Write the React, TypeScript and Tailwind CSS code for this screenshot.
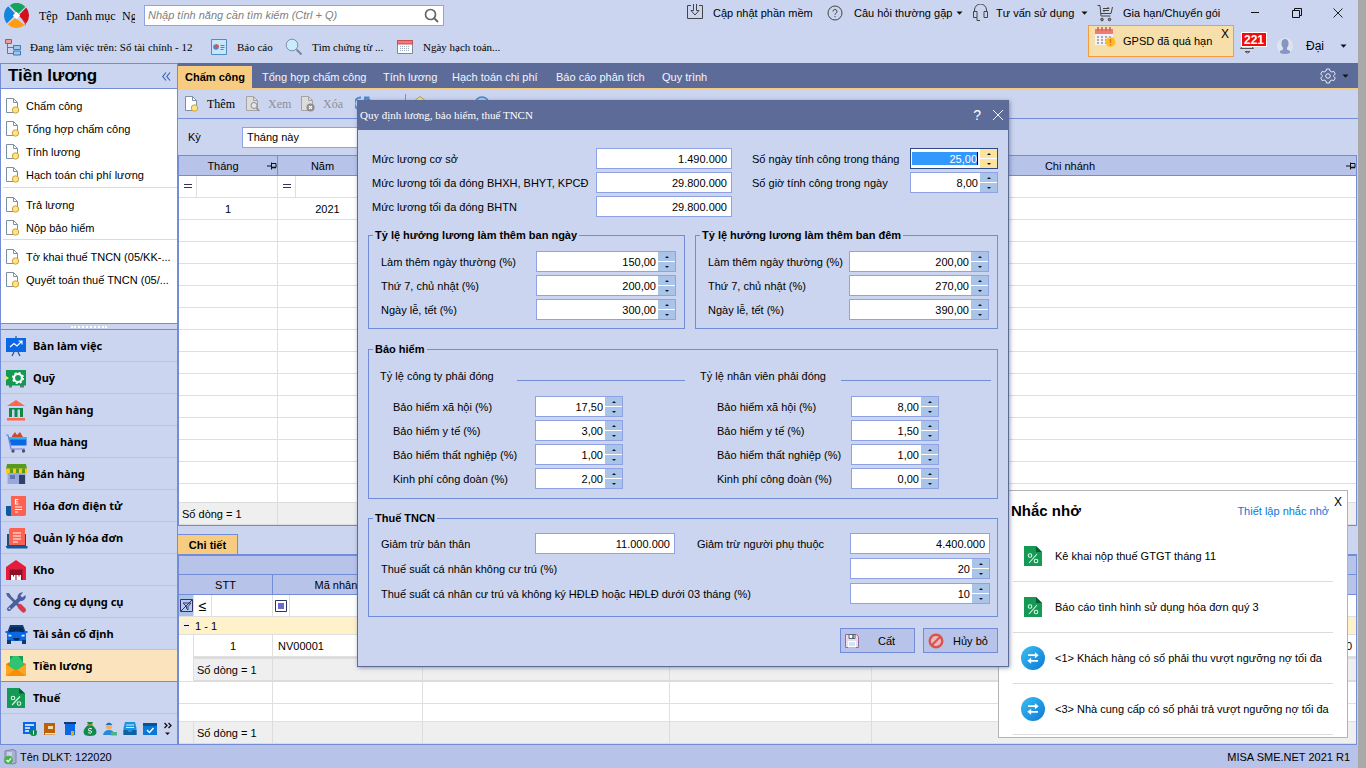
import React, { useId } from "react";

/* ---------- small shared drawings ---------- */

const Caret = ({ className = "" }: { className?: string }) => (
  <svg className={`shrink-0 ${className}`} width="7" height="4" viewBox="0 0 7 4" aria-hidden="true">
    <path d="M0.500 0.500h6L3.500 3.800z" fill="#111" />
  </svg>
);

const DocIcon = ({ kind = "new" }: { kind?: "new" | "view" | "delete" }) => {
  const off = kind !== "new";
  return (
    <svg width="16" height="16" viewBox="0 0 16 16" className="shrink-0" aria-hidden="true">
      <path d="M1.500 0.500h7l4 4v10h-11z" fill={off ? "#dcdcdc" : "#fff"} stroke={off ? "#a3a3a3" : "#7d8fa3"} />
      <path d="M8.500 0.500v4h4" fill="none" stroke={off ? "#a3a3a3" : "#7d8fa3"} />
      {kind === "new" && <circle cx="10.500" cy="12" r="3.200" fill="#ffe38a" stroke="#c9a23a" />}
      {kind === "view" && (
        <g fill="#e5e5e5" stroke="#8f8f8f">
          <circle cx="9" cy="9.500" r="3" />
          <path d="M11.300 12l3 3" strokeWidth="1.600" />
        </g>
      )}
      {kind === "delete" && (
        <g>
          <circle cx="10.500" cy="11.500" r="4" fill="#8d8d8d" />
          <path d="M9 10l3 3m0-3l-3 3" stroke="#fff" strokeWidth="1.100" />
        </g>
      )}
    </svg>
  );
};

const TaxIcon = () => (
  <svg width="20" height="22" viewBox="0 0 20 22" aria-hidden="true">
    <path d="M1 1h12l6 6v14H1z" fill="#149a55" />
    <path d="M13 1l6 6h-6z" fill="#075c30" />
    <g fill="none" stroke="#dff5e8" strokeWidth="1.100">
      <circle cx="7" cy="10.500" r="1.800" />
      <circle cx="13" cy="16" r="1.800" />
      <path d="M14 9L6 18" />
    </g>
  </svg>
);

const SwapIcon = () => (
  <svg width="24" height="24" viewBox="0 0 24 24" aria-hidden="true">
    <defs>
      <linearGradient id="swap-fill" x1="0" y1="0" x2="1" y2="1">
        <stop offset="0" stopColor="#3bc0f0" />
        <stop offset="1" stopColor="#0b78d6" />
      </linearGradient>
    </defs>
    <circle cx="12" cy="12" r="12" fill="url(#swap-fill)" />
    <g stroke="#fff" strokeWidth="1.700" fill="#fff">
      <path d="M7 9.200h8M9 14.800h8" />
      <path d="M14 6.500l3.500 2.700-3.500 2.700zM10 12.100l-3.500 2.700 3.500 2.700z" strokeWidth="0.300" />
    </g>
  </svg>
);

const PinIcon = () => (
  <svg width="10" height="8" viewBox="0 0 10 8" aria-hidden="true">
    <path d="M0 4h4M4.500 0.500v7M4.500 1.500h4.500v4h-4.500" fill="none" stroke="#111" />
    <path d="M4.500 5.500h4.500" stroke="#111" strokeWidth="1.600" />
  </svg>
);

/* ---------- header ---------- */

const Logo = () => (
  <svg width="25" height="25" viewBox="-12 -12 24 24" aria-hidden="true">
    <path d="M-4 -11.300A12 12 0 0 1 8.500 -8.500L1.500 -1.500L-6.500 -9.500z" fill="#16a35c" />
    <path d="M9.300 -7.600A12 12 0 0 1 9.500 7.300L2 0z" fill="#d3101b" />
    <path d="M9.500 7.300L4.500 2.500L9 9A12 12 0 0 1 7.500 9.400z" fill="#d3101b" />
    <path d="M7.800 9.200A12 12 0 0 1 -8.500 8.500L-1 2.500z" fill="#ff9c10" />
    <path d="M-9.300 7.600A12 12 0 0 1 -8 -9L-1.500 -2L-3 1.500z" fill="#1285dc" />
    <path d="M0 -3.500L3.500 0L0 3.500L-3.500 0z" fill="#fff" />
  </svg>
);

const Header = () => (
  <header className="flex h-[63px] shrink-0 justify-between">
    <div className="flex flex-col font-['Liberation_Serif',serif]">
      <div className="flex h-[31px] items-center pl-1 text-xs">
        <Logo />
        <nav className="flex items-center overflow-hidden">
          <a href="#tep" className="ml-[10px] w-[27px]">Tệp</a>
          <a href="#danhmuc" className="w-14 whitespace-nowrap">Danh mục</a>
          <a href="#nghiepvu" className="w-[13px] overflow-hidden whitespace-nowrap">Ng</a>
        </nav>
        <div className="ml-[9px] flex h-[21px] w-[300px] items-center border border-[#8fa3e4] bg-white pr-1">
          <input
            aria-label="Tìm kiếm"
            placeholder="Nhập tính năng cần tìm kiếm (Ctrl + Q)"
            className="min-w-0 flex-1 pl-[3px] font-['Liberation_Sans',sans-serif] text-[11px] italic outline-none placeholder:text-[#808080]"
          />
          <svg width="15" height="15" viewBox="0 0 15 15" aria-hidden="true">
            <circle cx="6.500" cy="6.500" r="5" fill="none" stroke="#666" strokeWidth="1.700" />
            <path d="M10 10l4 4" stroke="#666" strokeWidth="1.800" />
          </svg>
        </div>
      </div>
      <div className="flex h-8 items-center pl-1">
        <svg width="18" height="18" viewBox="0 0 18 18" aria-hidden="true">
          <path d="M3.500 6v9.500H9M3.500 9.500H9" fill="none" stroke="#5f7896" />
          <path d="M1.500 1.500h6v4h-6z" fill="#f59a9a" stroke="#cc4848" />
          <path d="M9.500 7.500h7v4h-7zM9.500 13h7v4h-7z" fill="#9cc7ee" stroke="#3e79b8" />
        </svg>
        <a href="#dulieu" className="ml-2 w-[181px] whitespace-nowrap">Đang làm việc trên: Sổ tài chính - 12</a>
        <svg width="16" height="16" viewBox="0 0 16 16" aria-hidden="true">
          <path d="M0.500 0.500h15v15h-15z" fill="#c8e6fa" stroke="#4d8fc4" />
          <circle cx="5" cy="8" r="2.800" fill="#5f7fc0" />
          <path d="M5 8V5.200A2.800 2.800 0 0 1 7.800 8z" fill="#d9534f" />
          <path d="M9.500 6.500h4M9.500 8.500h4M9.500 10.500h3" stroke="#4d7fb8" />
        </svg>
        <a href="#baocao" className="ml-[10px] w-12 whitespace-nowrap">Báo cáo</a>
        <svg width="18" height="18" viewBox="0 0 18 18" aria-hidden="true">
          <circle cx="7" cy="7" r="5.800" fill="#c9edfb" stroke="#7d93a8" />
          <path d="M11.500 11.500l5 5" stroke="#76869b" strokeWidth="2" />
        </svg>
        <a href="#timct" className="ml-[9px] w-[85px] whitespace-nowrap">Tìm chứng từ ...</a>
        <svg width="16" height="16" viewBox="0 0 16 16" aria-hidden="true">
          <path d="M0.500 1.500h15v13h-15z" fill="#fff" stroke="#7e8a9c" />
          <path d="M0.500 1.500h15v3.500h-15z" fill="#f07a7a" stroke="#c94b4b" />
          <path d="M3 7.500h10M3 9.500h10M3 11.500h10" stroke="#9cabc0" strokeDasharray="1 1" />
        </svg>
        <a href="#ngayht" className="ml-[10px] whitespace-nowrap">Ngày hạch toán...</a>
      </div>
    </div>

    <div className="flex flex-col">
      <div className="flex h-[25px] items-center">
        <svg width="18" height="18" viewBox="0 0 18 18" fill="none" stroke="#444" aria-hidden="true">
          <path d="M5 1.500H1.500v13h15v-13H13" />
          <path d="M7.500 0v6.500H5l4 4.500 4-4.500h-2.500V0" />
        </svg>
        <button className="ml-[9px] w-[114px] text-left whitespace-nowrap">Cập nhật phần mềm</button>
        <svg width="16" height="16" viewBox="0 0 16 16" fill="none" stroke="#444" aria-hidden="true">
          <circle cx="8" cy="8" r="7" />
          <path d="M6 6.500a2 2 0 1 1 2.800 1.800c-.6.3-.8.700-.8 1.400M8 11v1.200" />
        </svg>
        <button className="ml-[11px] w-[102px] text-left whitespace-nowrap">Câu hỏi thường gặp</button>
        <Caret />
        <svg className="ml-[9px]" width="17" height="18" viewBox="0 0 17 18" fill="none" stroke="#444" aria-hidden="true">
          <path d="M2.500 7.500V6a6 6 0 0 1 12 0v1.500" />
          <path d="M1.500 7.500h3.500v6H1.500zM12 7.500h3.500v6H12zM5 13.500v3h3" />
        </svg>
        <button className="ml-[7px] w-[85px] text-left whitespace-nowrap">Tư vấn sử dụng</button>
        <Caret />
        <svg className="ml-[9px]" width="17" height="18" viewBox="0 0 17 18" fill="none" stroke="#444" aria-hidden="true">
          <path d="M0.500 1.500h2.500l1 10.500h9.500M3.500 9.500h10.500l1.500-6.500" />
          <path d="M6 4.500h6l-1.500-1.500M12 6.500H6l1.500 1.500" />
          <circle cx="5" cy="15.500" r="1.300" fill="#888" />
          <circle cx="12.500" cy="15.500" r="1.300" fill="#888" />
        </svg>
        <button className="ml-[9px] w-[111px] text-left whitespace-nowrap">Gia hạn/Chuyển gói</button>
        <button aria-label="Thu nhỏ" className="flex w-[42px] justify-center">
          <svg width="12" height="12" viewBox="0 0 12 12"><path d="M2 5.500h8" stroke="#111" /></svg>
        </button>
        <button aria-label="Khôi phục" className="flex w-[42px] justify-center">
          <svg width="12" height="12" viewBox="0 0 12 12" fill="none" stroke="#111">
            <path d="M1.500 3.500h7v7h-7zM3.500 3.500v-2h7v7h-2" />
          </svg>
        </button>
        <button aria-label="Đóng" className="flex w-10 justify-center">
          <svg width="12" height="12" viewBox="0 0 12 12"><path d="M1.500 1.500l9 9M10.500 1.500l-9 9" stroke="#222" /></svg>
        </button>
      </div>
      <div className="flex h-[38px] items-start justify-end">
        <div className="relative flex h-8 w-[146px] items-center border border-[#f59b3a] bg-[#f6dfaa] pl-1">
          <svg className="-mt-2" width="24" height="24" viewBox="0 0 24 24" aria-hidden="true">
            <path d="M2 4h18v16H2z" fill="#f7f1f2" />
            <path d="M2 4h18v5H2z" fill="#ef7b78" />
            <path d="M5 2v4M9 2v4M13 2v4M17 2v4" stroke="#c9605f" strokeWidth="1.500" />
            <path d="M4 12h14M4 15h14M4 18h10" stroke="#8b93a8" strokeWidth="1.500" strokeDasharray="2 2" />
            <circle cx="17.500" cy="17" r="5" fill="#fbbf2d" />
            <path d="M17.500 14v4M17.500 19v1.200" stroke="#e86f1c" strokeWidth="1.500" />
          </svg>
          <span className="ml-[6px] whitespace-nowrap">GPSD đã quá hạn</span>
          <button aria-label="Đóng thông báo" className="absolute top-px right-1 text-xs leading-[14px]">X</button>
        </div>
        <div className="relative ml-[6px] h-8 w-9">
          <svg className="absolute top-[14px] left-0" width="16" height="16" viewBox="0 0 16 16" fill="none" stroke="#555" aria-hidden="true">
            <path d="M2 7.500L0.500 9.500h13L12 7.500M5 12.500l2.500 1.500 2.500-1.500z" />
          </svg>
          <span className="absolute top-[7px] left-px h-[15px] border border-white bg-[#f40b0b] px-[2px] text-xs leading-[14px] font-bold text-white">221</span>
        </div>
        <svg className="mt-3 mr-3" width="18" height="18" viewBox="0 0 18 18" aria-hidden="true">
          <circle cx="9" cy="9" r="8" fill="#dfe3ee" />
          <ellipse cx="9" cy="6.500" rx="3.500" ry="4.500" fill="#8595c4" />
          <path d="M7 9h4v3.500l3 1.500v2q-5 2-10 0v-2l3-1.500z" fill="#8595c4" />
        </svg>
        <button className="mt-3 flex h-[18px] w-[52px] items-center text-xs">
          <span className="w-[34px] text-left">Đại</span>
          <Caret />
        </button>
      </div>
    </div>
  </header>
);

/* ---------- sidebar ---------- */

const navIcons: Record<string, React.ReactNode> = {
  desk: (
    <g>
      <path d="M10 0v3" stroke="#17345f" />
      <path d="M0 2h20v14H0z" fill="#0a67e6" />
      <path d="M4 11l4-3.500 3 2.500 5-5M12.500 5H16v3.500" fill="none" stroke="#fff" strokeWidth="1.100" />
      <path d="M8 16l-2 4M12 16l2 4" stroke="#21518c" strokeWidth="1.200" />
    </g>
  ),
  safe: (
    <g>
      <path d="M3 17h3v2.500H3zM14 17h4v2.500h-4z" fill="#6b7280" />
      <path d="M0 2h20v15.500H0z" fill="#119a50" />
      <path d="M0 8l3 2-3 2z" fill="#ffe94a" />
      <circle cx="12" cy="10" r="4" fill="none" stroke="#fff" strokeWidth="2.200" />
      <circle cx="12" cy="10" r="5.300" fill="none" stroke="#fff" strokeWidth="1.500" strokeDasharray="2.100 2.060" />
    </g>
  ),
  bank: (
    <g>
      <path d="M10 0l9 6H1z" fill="#ff6650" />
      <path d="M3 8h14v1.500H3zM3 9h3v8H3zM8.500 9h3v8h-3zM14 9h3v8h-3z" fill="#0c8a48" />
      <path d="M1 18h18v2.500H1z" fill="#ff6650" />
    </g>
  ),
  cart: (
    <g>
      <path d="M6 4l3-4 2 3 3-3 3 5H6z" fill="#cf4a2c" />
      <path d="M3 5h17.500v8.500H5z" fill="#0a67e6" />
      <path d="M3 5h17.500v2.500H3.500z" fill="#33b2ee" />
      <path d="M0 3h2l3 14h14" fill="none" stroke="#6d7fe0" strokeWidth="1.200" />
      <circle cx="7" cy="19" r="1.700" fill="#4d5563" />
      <circle cx="17.500" cy="19" r="1.700" fill="#4d5563" />
    </g>
  ),
  shop: (
    <g>
      <path d="M1.500 9h18v11h-18z" fill="#98a8dc" />
      <path d="M13 11h6v9h-6z" fill="#33406e" />
      <path d="M4 11h5v4H4z" fill="#6176b8" />
      <path d="M1 0h19l1 5H0z" fill="#569a20" />
      <path d="M0 4.500h21V9H0z" fill="#ffc61a" />
      <path d="M4 4.500h3V9H4zM10 4.500h3V9h-3zM16 4.500h3V9h-3z" fill="#569a20" />
    </g>
  ),
  einvoice: (
    <g>
      <path d="M0 10h6v10H2q-2 0-2-2z" fill="#10599a" />
      <path d="M5 0h15v18q0 2-2 2H5z" fill="#ff6150" />
      <path d="M12.500 3.500H9.500v4.500h3M9.500 5.700h2.500M9 11h7M9 13.500h7M9 16h3" fill="none" stroke="#fff" strokeWidth="1.100" />
    </g>
  ),
  invoices: (
    <g>
      <path d="M1 6h19v12H1z" fill="#1b4e80" />
      <path d="M-0.500 18h22v2.500H1z" fill="#10599a" />
      <path d="M5 0h14v17H3V2q0-2 2-2z" fill="#ff6150" />
      <path d="M7 5h8M7 8h8M7 11h8M7 14h5" stroke="#fff" strokeWidth="1.100" />
    </g>
  ),
  store: (
    <g>
      <path d="M10 0l10 7v13H0V7z" fill="#e61c3c" />
      <path d="M3.500 9.500h13V20h-13z" fill="#8c1029" />
      <path d="M5 15h4.500v5H5zM10.500 15H15v5h-4.500z" fill="#fff" />
      <path d="M7 15h1v1.500H7zM12.500 15h1v1.500h-1z" fill="#8c1029" />
    </g>
  ),
  tools: (
    <g>
      <path d="M1.500 2.500l11 11" stroke="#4d64a0" strokeWidth="2.600" />
      <path d="M0 1l3 0 2 3-2 1-2-2z" fill="#4d64a0" />
      <path d="M3 17L14 6.500" stroke="#4a5fa0" strokeWidth="4" strokeLinecap="round" />
      <path d="M19.500 3l-3.300 2.500-1.800-1.800L17 .3A5 5 0 0 0 11.500 6q1.500 4 5 2.800A5 5 0 0 0 19.500 3z" fill="#4a5fa0" />
      <path d="M14 14.500l3.500 3.500" stroke="#d83a4c" strokeWidth="5" strokeLinecap="round" />
      <circle cx="3.500" cy="16.500" r="1" fill="#cbd5ef" />
    </g>
  ),
  car: (
    <g>
      <path d="M4 1h13l3 8H1z" fill="#0d3f7e" />
      <path d="M5 3h11l2 5H3z" fill="#082a57" />
      <path d="M-0.500 7h3v2h-3zM18.500 7h3v2h-3z" fill="#0a67e6" />
      <path d="M1 9q9.500-3 19 0v8H1z" fill="#0a67e6" />
      <path d="M1 16h4v4H1zM16 16h4v4h-4z" fill="#0b3a77" />
      <path d="M7 14h7l-1.500 2.500h-4z" fill="#082a57" />
      <path d="M2.500 10.500l3 .5v1.500h-3zM18.500 10.500l-3 .5v1.500h3z" fill="#d7ecff" />
    </g>
  ),
  salary: (
    <g>
      <path d="M0 8l10-5 10 5v12H0z" fill="#e07b0a" />
      <path d="M4 0h13v14H4z" fill="#2fc46f" />
      <path d="M4 0h3l-3 4zM17 0v6l-5-6z" fill="#1a9c55" />
      <path d="M0 8l10 7 10-7v12H0z" fill="#ffa51f" />
      <path d="M0 20l9-6.500h2L20 20z" fill="#f79009" />
    </g>
  ),
  tax: (
    <g>
      <path d="M1 0h12l6 5.500V20H1z" fill="#149a55" />
      <path d="M13 0l6 5.500h-6z" fill="#075c30" />
      <g fill="none" stroke="#dff5e8" strokeWidth="1.100">
        <circle cx="7" cy="10" r="1.800" />
        <circle cx="13" cy="15.500" r="1.800" />
        <path d="M14 8.500L6 17" />
      </g>
    </g>
  ),
};

const modules = [
  { icon: "desk", name: "Bàn làm việc" },
  { icon: "safe", name: "Quỹ" },
  { icon: "bank", name: "Ngân hàng" },
  { icon: "cart", name: "Mua hàng" },
  { icon: "shop", name: "Bán hàng" },
  { icon: "einvoice", name: "Hóa đơn điện tử" },
  { icon: "invoices", name: "Quản lý hóa đơn" },
  { icon: "store", name: "Kho" },
  { icon: "tools", name: "Công cụ dụng cụ" },
  { icon: "car", name: "Tài sản cố định" },
  { icon: "salary", name: "Tiền lương", active: true },
  { icon: "tax", name: "Thuế" },
];

const taskGroups = [
  ["Chấm công", "Tổng hợp chấm công", "Tính lương", "Hạch toán chi phí lương"],
  ["Trả lương", "Nộp bảo hiểm"],
  ["Tờ khai thuế TNCN (05/KK-...", "Quyết toán thuế TNCN (05/..."],
];

const MiniIcon = ({ children, label }: { children: React.ReactNode; label: string }) => (
  <button aria-label={label}>
    <svg width="14" height="14" viewBox="0 0 14 14">{children}</svg>
  </button>
);

const Sidebar = () => (
  <aside className="flex w-[178px] shrink-0 flex-col border-r border-b border-l border-[#728cd8]">
    <div className="flex h-[26px] shrink-0 items-center justify-between border-t border-b border-[#728cd8] pr-[6px] pl-[7px]">
      <h1 className="text-[17px] leading-6 font-bold">Tiền lương</h1>
      <button aria-label="Thu gọn">
        <svg width="9" height="9" viewBox="0 0 9 9" fill="none" stroke="#3f62b5" strokeWidth="1.200">
          <path d="M4 0.500L0.800 4.500 4 8.500M8 0.500L4.800 4.500 8 8.500" />
        </svg>
      </button>
    </div>
    <nav className="flex-1 overflow-hidden bg-white pt-[5px]">
      {taskGroups.map((group, i) => (
        <ul key={i} className={i ? "ml-[2px] border-t border-[#dcdcdc] pt-[5px]" : "ml-[2px] pb-px"}>
          {group.map((t) => (
            <li key={t}>
              <a href="#task" className="flex h-[23px] items-center gap-[5px] pl-[2px] whitespace-nowrap">
                <DocIcon />
                {t}
              </a>
            </li>
          ))}
        </ul>
      ))}
    </nav>
    <div className="flex h-[7px] shrink-0 items-center justify-center border-t border-b border-[#728cd8]">
      <span className="w-9 border-t-2 border-dotted border-white" />
    </div>
    <nav className="shrink-0 font-['Noto_Sans',sans-serif] font-bold">
      {modules.map((m) => (
        <a
          key={m.name}
          href="#module"
          className={`flex h-8 items-center gap-[7px] border-b pl-[5px] ${
            m.active ? "border-[#728cd8] bg-[#fbe3bd]" : "border-[#b7c3e8]"
          }`}
        >
          <svg width="20" height="20" viewBox="0 0 20 20" className="overflow-visible" aria-hidden="true">
            {navIcons[m.icon]}
          </svg>
          {m.name}
        </a>
      ))}
    </nav>
    <div className="flex h-[30px] shrink-0 items-center gap-[6px] pl-[22px]">
      <MiniIcon label="Hợp đồng">
        <path d="M0 0h13v12H0z" fill="#0a67e6" />
        <path d="M2 3h9M2 6h5M2 9h4" stroke="#fff" strokeWidth="1.300" />
        <circle cx="10.500" cy="10.500" r="3.500" fill="#0c8a48" />
        <path d="M10.500 8.500v4" stroke="#fff" />
      </MiniIcon>
      <MiniIcon label="Sổ sách">
        <path d="M1 1h11v12H1z" fill="#b9610b" />
        <path d="M2 11h10v1.500H2z" fill="#f4e5c8" />
        <path d="M5 4h5v3H5z" fill="#f6d9a4" />
      </MiniIcon>
      <MiniIcon label="Giá thành">
        <path d="M2 1h10v12H2z" fill="#0a67e6" />
        <path d="M1 0h12v2H1z" fill="#123b73" />
        <path d="M8 9h3v5H8z" fill="#f6a417" />
      </MiniIcon>
      <MiniIcon label="Ngân sách">
        <path d="M4 0h6L8.500 3q5 3 5 7.500Q13 14 7 14T.5 10.500Q.5 6 5.500 3z" fill="#128a4a" />
        <path d="M4 3h6" stroke="#c58b1c" strokeWidth="1.400" />
        <path d="M8.800 6.700Q5.500 5.500 5.500 7.500T7 8.700q2 .3 1.700 1.500Q8 12 5.300 10.700" fill="none" stroke="#fff" />
      </MiniIcon>
      <MiniIcon label="Nhân viên">
        <circle cx="6" cy="4.500" r="3" fill="#f0b35a" />
        <path d="M2.500 3Q6-2 9.500 3z" fill="#1b6fc0" />
        <path d="M0 13q1-5 6-5t5 5z" fill="#2b87d8" />
        <path d="M8 10h6v3.500H8z" fill="#4bb58a" />
      </MiniIcon>
      <MiniIcon label="Tổng hợp">
        <path d="M2 0h10l1.500 6v7H.5V6z" fill="#1a94dd" />
        <path d="M3 3h8M3 5.500h8" stroke="#d6efff" />
        <path d="M.5 8h4l1 2h3l1-2h4v5H.5z" fill="#135f9f" />
      </MiniIcon>
      <MiniIcon label="Lịch">
        <path d="M0 1h14v12H0z" fill="#0a78d8" />
        <path d="M0 1h14v3H0z" fill="#114f8e" />
        <path d="M4 8l2.500 2.500L10.500 6" fill="none" stroke="#fff" strokeWidth="1.400" />
      </MiniIcon>
      <button aria-label="Thêm phân hệ">
        <svg width="10" height="14" viewBox="0 0 10 14" fill="none" stroke="#111" strokeWidth="1.300">
          <path d="M1.500 1l2.500 2.500L1.500 6M5.500 1L8 3.500 5.500 6" />
          <path d="M2 10.500h5L4.500 13z" fill="#111" stroke="none" />
        </svg>
      </button>
    </div>
  </aside>
);

/* ---------- main area ---------- */

const tabs = [
  { name: "Tổng hợp chấm công", width: "w-[121px]" },
  { name: "Tính lương", width: "w-[69px]" },
  { name: "Hạch toán chi phí", width: "w-[104px]" },
  { name: "Báo cáo phân tích", width: "w-[106px]" },
  { name: "Quy trình", width: "w-[60px]" },
];

const TabBar = () => (
  <div className="flex h-[27px] shrink-0 items-end border-b-2 border-[#f7cc81] bg-[#5d6b99] pr-[9px] text-[#f4f6fc]">
    <button className="h-[22px] w-[74px] bg-[#f7cc81] font-bold whitespace-nowrap text-black">Chấm công</button>
    <nav className="ml-[10px] flex h-[22px] flex-1 items-center">
      {tabs.map((t) => (
        <a key={t.name} href="#tab" className={`${t.width} whitespace-nowrap`}>
          {t.name}
        </a>
      ))}
    </nav>
    <button aria-label="Thiết lập" className="flex h-[25px] items-center gap-[6px]">
      <svg width="16" height="16" viewBox="0 0 16 16" fill="none" stroke="#e8ebf5">
        <path d="M6.500 1h3l.5 2 1.800 1 2-.6 1.500 2.600L13.800 7.500v1l1.500 1.500-1.500 2.600-2-.6-1.800 1-.5 2h-3l-.5-2-1.800-1-2 .6L.7 10l1.500-1.500v-1L.7 6l1.500-2.600 2 .6L6 3z" />
        <circle cx="8" cy="8" r="2.300" />
      </svg>
      <Caret />
    </button>
  </div>
);

const Toolbar = () => (
  <div className="flex h-[29px] shrink-0 items-center border-b border-[#728cd8] pl-[6px] font-['Liberation_Serif',serif] text-xs">
    <button className="flex w-[61px] items-center gap-[7px]"><DocIcon />Thêm</button>
    <button className="flex w-[55px] items-center gap-[7px] text-[#8b8f99]"><DocIcon kind="view" />Xem</button>
    <button className="flex w-[55px] items-center gap-[7px] text-[#8b8f99]"><DocIcon kind="delete" />Xóa</button>
    <svg width="16" height="16" viewBox="0 0 16 16" fill="none" stroke="#4a8cd0" strokeWidth="2" aria-hidden="true">
      <path d="M6 1.500A6 6 0 0 0 5 13.500M10 14.500A6 6 0 0 0 11 2.500M10 6V1.500h4.500" />
    </svg>
    <span className="ml-[34px] h-5 w-px bg-[#5c9ad8]" />
    <svg className="ml-[6px]" width="16" height="16" viewBox="0 0 16 16" aria-hidden="true">
      <path d="M1 6l7-5.500 7 5.500v9H1z" fill="#f8e08e" stroke="#b99a3a" />
    </svg>
    <svg className="ml-[46px]" width="16" height="16" viewBox="0 0 16 16" aria-hidden="true">
      <circle cx="8" cy="8" r="7" fill="#a8d0f2" stroke="#4a86c8" strokeWidth="1.500" />
    </svg>
  </div>
);

const headCell = "border-r border-b border-[#728cd8] bg-[#b7c3e8] p-0 font-normal";
const bodyCell = "h-[22px] border-r border-b border-[#dfdfdf] p-0";
const footCell = "h-[22px] border-r border-b border-[#dcdcdc] bg-[#efefef] p-0";
const sumCell = "h-[25px] border-y-2 border-r border-[#dcdcdc] bg-[#efefef] p-0";

const HeadLabel = ({ children }: { children?: React.ReactNode }) => (
  <div className="flex items-center">
    <span className="flex-1 text-center whitespace-nowrap">{children}</span>
    <PinIcon />
  </div>
);

const EqualsFilter = () => (
  <div className="flex h-[21px] items-stretch">
    <span className="flex w-[18px] items-center justify-center border-r border-[#dfdfdf]">
      <svg width="8" height="5" viewBox="0 0 8 5" aria-hidden="true"><path d="M0 0.500h8M0 3.500h8" stroke="#333366" /></svg>
    </span>
  </div>
);

const MonthGrid = () => (
  <div className="flex min-h-0 flex-1 flex-col border border-[#728cd8] bg-white">
    <div className="min-h-0 flex-1 overflow-hidden">
      <table className="w-full table-fixed border-separate border-spacing-0">
        <colgroup>
          <col className="w-[99px]" />
          <col className="w-[100px]" />
          <col />
          <col className="w-[562px]" />
        </colgroup>
        <thead>
          <tr>
            <th className={`${headCell} h-5`}><HeadLabel>Tháng</HeadLabel></th>
            <th className={`${headCell} h-5`}><HeadLabel>Năm</HeadLabel></th>
            <th className={`${headCell} h-5`} />
            <th className={`${headCell} h-5 border-r-0`}><HeadLabel>Chi nhánh</HeadLabel></th>
          </tr>
        </thead>
        <tbody>
          <tr>
            <td className={bodyCell}><EqualsFilter /></td>
            <td className={bodyCell}><EqualsFilter /></td>
            <td className={bodyCell} />
            <td className={`${bodyCell} border-r-0`} />
          </tr>
          <tr>
            <td className={`${bodyCell} text-center`}>1</td>
            <td className={`${bodyCell} text-center`}>2021</td>
            <td className={bodyCell} />
            <td className={`${bodyCell} border-r-0`} />
          </tr>
          {Array.from({ length: 13 }, (_, i) => (
            <tr key={i}>
              <td className={bodyCell} />
              <td className={bodyCell} />
              <td className={bodyCell} />
              <td className={`${bodyCell} border-r-0`} />
            </tr>
          ))}
        </tbody>
      </table>
    </div>
    <div className="flex h-[23px] shrink-0 items-center border-t border-b border-[#dcdcdc] bg-[#efefef]">
      <span className="h-full w-[99px] border-r border-[#dcdcdc] pl-[3px] leading-[22px] whitespace-nowrap">Số dòng = 1</span>
    </div>
  </div>
);

const DetailGrid = () => (
  <div className="shrink-0 overflow-hidden border-t-2 border-r border-b border-l border-[#728cd8] bg-white">
    <table className="w-full table-fixed border-separate border-spacing-0">
      <colgroup>
        <col className="w-[15px]" />
        <col className="w-[79px]" />
        <col className="w-[150px]" />
        <col className="w-[247px]" />
        <col className="w-[202px]" />
        <col />
      </colgroup>
      <thead>
        <tr><th colSpan={6} className={`${headCell} h-[19px] border-r-0`} /></tr>
        <tr>
          <th colSpan={2} className={`${headCell} h-5`}>STT</th>
          <th className={`${headCell} h-5 whitespace-nowrap`}>Mã nhân viên</th>
          <th className={`${headCell} h-5`} />
          <th className={`${headCell} h-5`} />
          <th className={`${headCell} h-5 border-r-0`} />
        </tr>
      </thead>
      <tbody>
        <tr>
          <td className={`${bodyCell} bg-[#a9c4e6]`}>
            <svg className="mx-auto" width="13" height="13" viewBox="0 0 13 13" aria-hidden="true">
              <path d="M0.500 0.500h12v12H0.500z" fill="#b9c8f0" stroke="#2e3566" />
              <path d="M3 4h8L8 7.500V11L6.500 9.500v-2zM1 12L12 1" fill="none" stroke="#2e3566" />
            </svg>
          </td>
          <td className={bodyCell}>
            <span className="flex h-[21px] w-[18px] items-center justify-center border-r border-[#dfdfdf] text-sm">≤</span>
          </td>
          <td className={bodyCell}>
            <span className="flex h-[21px] w-[17px] items-center justify-center border-r border-[#dfdfdf]">
              <svg width="12" height="12" viewBox="0 0 12 12" aria-hidden="true">
                <path d="M0.500 0.500h11v11H0.500z" fill="#fff" stroke="#2e3566" />
                <path d="M3 3h6v6H3z" fill="#6a67d0" />
              </svg>
            </span>
          </td>
          <td className={bodyCell} />
          <td className={bodyCell} />
          <td className={`${bodyCell} border-r-0`} />
        </tr>
        <tr>
          <td colSpan={6} className="h-[18px] border-b border-[#dfdfdf] bg-[#fff2ca] p-0">
            <div className="flex items-center pl-[3px]">
              <span className="flex size-2 items-center justify-center bg-[#f3efe6]">
                <span className="h-px w-[5px] bg-black" />
              </span>
              <span className="ml-[5px] leading-4">1 - 1</span>
            </div>
          </td>
        </tr>
        <tr>
          <td className="border-r border-[#dfdfdf] p-0" />
          <td className={`${bodyCell} text-center`}>1</td>
          <td className={`${bodyCell} pl-[5px]`}>NV00001</td>
          <td className={bodyCell} />
          <td className={bodyCell} />
          <td className={`${bodyCell} border-r-0 pr-1 text-right`}>0</td>
        </tr>
        <tr>
          <td className="border-r border-b border-[#dfdfdf] p-0" />
          <td className={`${sumCell} pl-[3px] whitespace-nowrap`}>Số dòng = 1</td>
          <td className={sumCell} />
          <td className={sumCell} />
          <td className={sumCell} />
          <td className={`${sumCell} border-r-0`} />
        </tr>
        <tr>
          <td colSpan={2} className={bodyCell} />
          <td className={bodyCell} />
          <td className={bodyCell} />
          <td className={bodyCell} />
          <td className={`${bodyCell} border-r-0`} />
        </tr>
        <tr>
          <td colSpan={2} className="h-[18px] border-r border-b border-[#dfdfdf] p-0" />
          <td className="border-r border-b border-[#dfdfdf]" />
          <td className="border-r border-b border-[#dfdfdf]" />
          <td className="border-r border-b border-[#dfdfdf]" />
          <td className="border-b border-[#dfdfdf]" />
        </tr>
      </tbody>
      <tfoot>
        <tr>
          <td className={footCell} />
          <td className={`${footCell} pl-[3px] whitespace-nowrap`}>Số dòng = 1</td>
          <td className={footCell} />
          <td className={footCell} />
          <td className={footCell} />
          <td className={`${footCell} border-r-0`} />
        </tr>
      </tfoot>
    </table>
  </div>
);

const Main = () => {
  const id = useId();
  return (
    <main className="flex min-w-0 flex-1 flex-col">
      <TabBar />
      <Toolbar />
      <div className="flex h-9 shrink-0 items-center pl-[10px]">
        <label htmlFor={id} className="w-[54px]">Kỳ</label>
        <select id={id} className="h-[21px] w-[200px] appearance-none border border-[#8fa3e4] bg-white pl-1 outline-none">
          <option>Tháng này</option>
        </select>
      </div>
      <div className="flex min-h-0 flex-1 flex-col pr-px">
        <MonthGrid />
        <div className="flex h-7 shrink-0 items-end">
          <button className="h-5 w-[60px] border-t border-r border-[#728cd8] bg-[#f7cc81] font-bold">Chi tiết</button>
        </div>
        <DetailGrid />
      </div>
    </main>
  );
};

/* ---------- reminder popup ---------- */

const reminders = [
  { icon: <TaxIcon />, text: "Kê khai nộp thuế GTGT tháng 11" },
  { icon: <TaxIcon />, text: "Báo cáo tình hình sử dụng hóa đơn quý 3" },
  { icon: <SwapIcon />, text: "<1> Khách hàng có số phải thu vượt ngưỡng nợ tối đa" },
  { icon: <SwapIcon />, text: "<3> Nhà cung cấp có số phải trả vượt ngưỡng nợ tối đa" },
];

const Reminders = () => (
  <section className="absolute right-[18px] bottom-[30px] w-[350px] border border-[#b4b4b4] bg-white pr-[14px] pb-[2px] pl-3">
    <div className="flex h-10 items-center justify-between pr-1">
      <h2 className="text-[15px] font-bold">Nhắc nhở</h2>
      <a href="#nhacnho" className="text-[#0a78d8]">Thiết lập nhắc nhở</a>
    </div>
    <button aria-label="Đóng nhắc nhở" className="absolute top-1 right-[5px] text-xs leading-[14px]">X</button>
    <ul className="ml-[2px]">
      {reminders.map((r) => (
        <li key={r.text} className="flex h-[51px] items-center border-b border-[#dcdcdc]">
          <span className="flex w-10 shrink-0 justify-center">{r.icon}</span>
          <span className="ml-[2px] whitespace-nowrap">{r.text}</span>
        </li>
      ))}
    </ul>
  </section>
);

/* ---------- dialog ---------- */

type FieldProps = {
  label: string;
  value: string;
  labelClass?: string;
  inputClass: string;
  spin?: boolean;
  focused?: boolean;
};

const Spinner = ({ focused }: { focused?: boolean }) => {
  const tone = focused ? "bg-[#fde3a0]" : "bg-[#a9c4e6]";
  return (
    <span className="flex w-[17px] flex-col gap-px">
      <button type="button" aria-label="Tăng" className={`flex flex-1 items-center justify-center ${tone}`}>
        <svg width="4" height="2" viewBox="0 0 4 2"><path d="M0 2L2 0l2 2z" fill="#111133" /></svg>
      </button>
      <button type="button" aria-label="Giảm" className={`flex flex-1 items-center justify-center ${tone}`}>
        <svg width="4" height="2" viewBox="0 0 4 2"><path d="M0 0l2 2 2-2z" fill="#111133" /></svg>
      </button>
    </span>
  );
};

const Field = ({ label, value, labelClass = "flex-1", inputClass, spin, focused }: FieldProps) => {
  const id = useId();
  return (
    <>
      <label htmlFor={id} className={`${labelClass} whitespace-nowrap`}>{label}</label>
      <span
        className={`flex h-[21px] shrink-0 border bg-white ${inputClass} ${
          focused ? "border-[#2f4a8a]" : "border-[#8fa3e4]"
        }`}
      >
        <input
          id={id}
          defaultValue={value}
          className={`min-w-0 flex-1 text-right outline-none ${
            focused
              ? "my-[3px] mr-[2px] ml-px border-r border-black bg-[#3399ff] text-white"
              : spin
                ? "pr-[2px]"
                : "pr-1"
          }`}
        />
        {spin && <Spinner focused={focused} />}
      </span>
    </>
  );
};

const Row = ({ children }: { children: React.ReactNode }) => <div className="flex items-center">{children}</div>;

const Group = ({ title, className = "", children }: { title: string; className?: string; children: React.ReactNode }) => (
  <fieldset className={`min-w-0 border border-[#728cd8] ${className}`}>
    <legend className="ml-1 px-[2px] leading-4 font-bold whitespace-nowrap">{title}</legend>
    {children}
  </fieldset>
);

const Overtime = ({ title, values }: { title: string; values: [string, string, string] }) => (
  <Group title={title}>
    <div className="flex flex-col gap-[3px] pt-2 pr-2 pb-2 pl-3">
      <Row><Field label="Làm thêm ngày thường (%)" value={values[0]} inputClass="w-[140px]" spin /></Row>
      <Row><Field label="Thứ 7, chủ nhật (%)" value={values[1]} inputClass="w-[140px]" spin /></Row>
      <Row><Field label="Ngày lễ, tết (%)" value={values[2]} inputClass="w-[140px]" spin /></Row>
    </div>
  </Group>
);

const insuranceLabels = ["Bảo hiểm xã hội (%)", "Bảo hiểm y tế (%)", "Bảo hiểm thất nghiệp (%)", "Kinh phí công đoàn (%)"];

type InsuranceProps = { title: string; values: string[]; titleClass: string; listClass: string; labelClass: string };

const Insurance = ({ title, values, titleClass, listClass, labelClass }: InsuranceProps) => (
  <div className="min-w-0">
    <div className="flex h-4 items-center">
      <span className={`${titleClass} leading-4 whitespace-nowrap`}>{title}</span>
      <span className="mt-2 h-px flex-1 bg-[#728cd8]" />
    </div>
    <div className={`mt-3 flex flex-col gap-[3px] ${listClass}`}>
      {insuranceLabels.map((l, i) => (
        <Row key={l}><Field label={l} value={values[i]} labelClass={labelClass} inputClass="w-[88px]" spin /></Row>
      ))}
    </div>
  </div>
);

const Dialog = () => (
  <div className="absolute inset-x-0 top-[100px] flex justify-center">
    <form
      role="dialog"
      aria-label="Quy định lương, bảo hiểm, thuế TNCN"
      className="w-[652px] border-x border-b border-[#5d6b99] bg-[#cbd5ef] shadow-[1px_1px_4px_rgba(60,70,110,0.500)]"
    >
      <div className="flex h-[30px] items-center bg-[#5d6b99] pr-1 pl-[2px] text-white">
        <h2 className="flex-1 font-['Liberation_Serif',serif]">Quy định lương, bảo hiểm, thuế TNCN</h2>
        <button type="button" aria-label="Trợ giúp" className="mr-[11px] text-sm">?</button>
        <button type="button" aria-label="Đóng hộp thoại">
          <svg width="12" height="12" viewBox="0 0 12 12"><path d="M1 1l10 10M11 1L1 11" stroke="#eef1fa" /></svg>
        </button>
      </div>
      <div className="px-[10px] pb-[13px]">
        <div className="flex gap-5 pt-[18px] pl-1">
          <div className="flex w-[360px] flex-col gap-[3px]">
            <Row><Field label="Mức lương cơ sở" value="1.490.000" inputClass="w-[136px]" /></Row>
            <Row><Field label="Mức lương tối đa đóng BHXH, BHYT, KPCĐ" value="29.800.000" inputClass="w-[136px]" /></Row>
            <Row><Field label="Mức lương tối đa đóng BHTN" value="29.800.000" inputClass="w-[136px]" /></Row>
          </div>
          <div className="flex flex-1 flex-col gap-[3px]">
            <Row><Field label="Số ngày tính công trong tháng" value="25,00" inputClass="w-[88px]" spin focused /></Row>
            <Row><Field label="Số giờ tính công trong ngày" value="8,00" inputClass="w-[88px]" spin /></Row>
          </div>
        </div>

        <div className="mt-[10px] grid grid-cols-[317px_1fr] gap-[10px]">
          <Overtime title="Tỷ lệ hưởng lương làm thêm ban ngày" values={["150,00", "200,00", "300,00"]} />
          <Overtime title="Tỷ lệ hưởng lương làm thêm ban đêm" values={["200,00", "270,00", "390,00"]} />
        </div>

        <Group title="Bảo hiểm" className="mt-3">
          <div className="grid grid-cols-[305px_1fr] gap-[15px] pt-[11px] pr-[6px] pb-[9px] pl-[11px]">
            <Insurance
              title="Tỷ lệ công ty phải đóng"
              values={["17,50", "3,00", "1,00", "2,00"]}
              titleClass="w-[137px]"
              listClass="pl-[13px]"
              labelClass="w-[142px]"
            />
            <Insurance
              title="Tỷ lệ nhân viên phải đóng"
              values={["8,00", "1,50", "1,00", "0,00"]}
              titleClass="w-[141px]"
              listClass="pl-[17px]"
              labelClass="w-[134px]"
            />
          </div>
        </Group>

        <Group title="Thuế TNCN" className="mt-[11px]">
          <div className="flex flex-col gap-1 pt-[7px] pr-[7px] pb-3 pl-3">
            <Row>
              <Field label="Giảm trừ bản thân" value="11.000.000" labelClass="w-[154px]" inputClass="w-[140px]" />
              <span className="w-[22px]" />
              <Field label="Giảm trừ người phụ thuộc" value="4.400.000" inputClass="w-[140px]" />
            </Row>
            <Row><Field label="Thuế suất cá nhân không cư trú (%)" value="20" inputClass="w-[140px]" spin /></Row>
            <Row><Field label="Thuế suất cá nhân cư trú và không ký HĐLĐ hoặc HĐLĐ dưới 03 tháng (%)" value="10" inputClass="w-[140px]" spin /></Row>
          </div>
        </Group>

        <div className="mt-[11px] flex justify-end gap-2">
          <button type="button" className="flex h-[25px] w-[75px] items-center border border-[#728cd8] bg-[#b7c3e8] pl-1">
            <svg width="14" height="14" viewBox="0 0 14 14" aria-hidden="true">
              <path d="M0.500 0.500h11l2 2v11H0.500z" fill="#efd9ee" stroke="#8d6f9d" />
              <path d="M4 0.500h6v4H4z" fill="#fff" stroke="#56656e" />
              <path d="M8 1v3" stroke="#2d3b45" strokeWidth="1.200" />
              <path d="M3 7h8v6.500H3z" fill="#fff" />
              <path d="M4 9h6M4 11h6" stroke="#8dd0f2" />
            </svg>
            <span className="flex-1 text-center">Cất</span>
          </button>
          <button type="button" className="flex h-[25px] w-[75px] items-center border border-[#728cd8] bg-[#b7c3e8] pl-1">
            <svg width="16" height="16" viewBox="0 0 16 16" aria-hidden="true">
              <circle cx="8" cy="8" r="6.300" fill="#f0b9b9" stroke="#d9534f" strokeWidth="2.400" />
              <path d="M4 12l8-8" stroke="#d9534f" strokeWidth="2.200" />
            </svg>
            <span className="flex-1 text-center whitespace-nowrap">Hủy bỏ</span>
          </button>
        </div>
      </div>
    </form>
  </div>
);

/* ---------- page ---------- */

export default function App() {
  return (
    <div className="relative flex h-screen overflow-hidden bg-[#a9a9a9] pr-2 font-['Liberation_Sans',sans-serif] text-[11px] leading-4 text-black">
      <div className="flex min-w-0 flex-1 flex-col bg-[#cbd5ef]">
        <Header />
        <div className="flex min-h-0 flex-1">
          <Sidebar />
          <Main />
        </div>
        <footer className="flex h-[23px] shrink-0 items-center bg-[#b7c3e8] pr-2 pl-1">
          <svg width="13" height="16" viewBox="0 0 13 16" aria-hidden="true">
            <path d="M1 2l8-1.500 3 1.500v12l-3 1-8-1z" fill="#a9b1d2" stroke="#7c83a8" />
            <path d="M3 4h5M3 6h5" stroke="#eef" />
            <circle cx="4.500" cy="11" r="4.300" fill="#43b649" />
            <path d="M2.500 11l1.700 1.800L7 9.300" fill="none" stroke="#fff" strokeWidth="1.300" />
          </svg>
          <span className="ml-[3px] flex-1">Tên DLKT: 122020</span>
          <span>MISA SME.NET 2021 R1</span>
        </footer>
      </div>
      <Reminders />
      <Dialog />
    </div>
  );
}
